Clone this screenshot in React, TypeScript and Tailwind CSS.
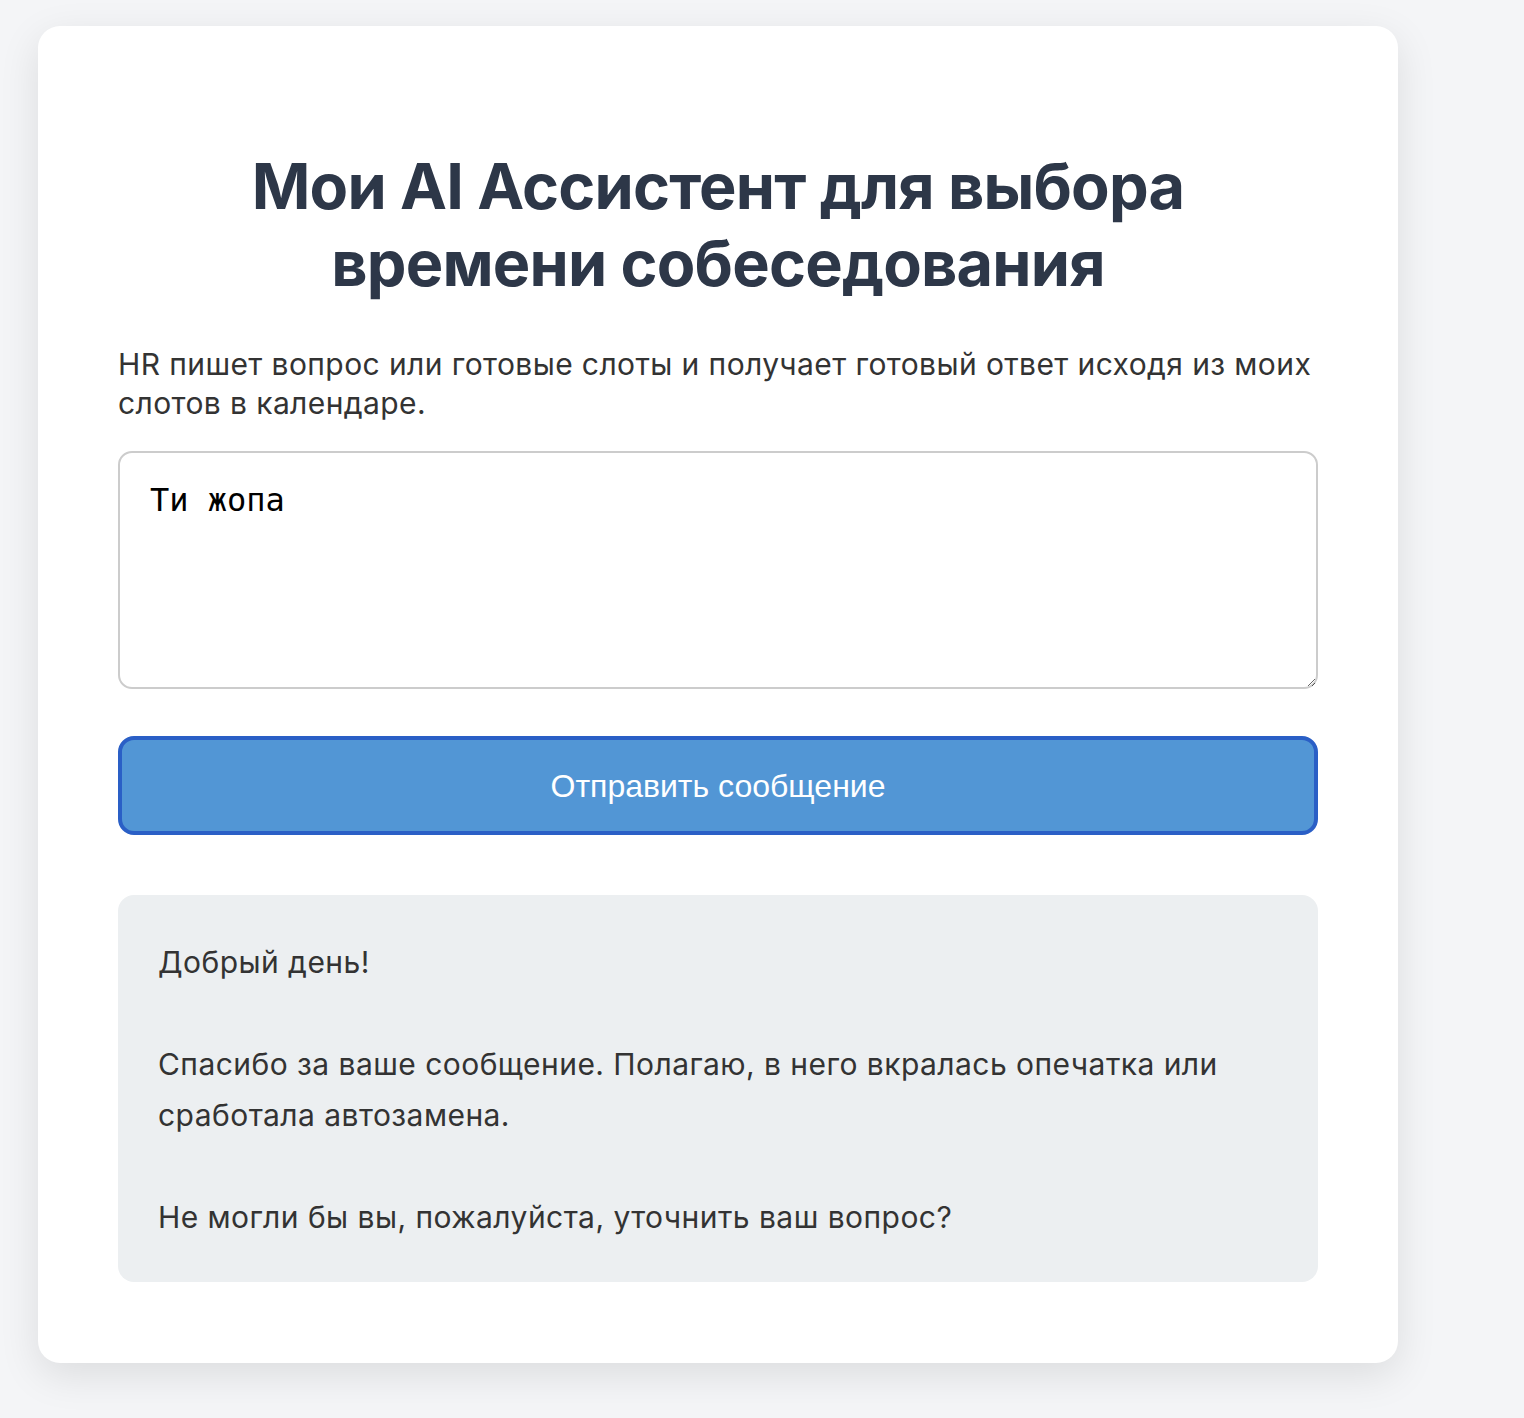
import React from "react";

export default function App() {
  const reply =
    "Добрый день!\n\nСпасибо за ваше сообщение. Полагаю, в него вкралась опечатка или сработала автозамена.\n\nНе могли бы вы, пожалуйста, уточнить ваш вопрос?";
  return (
    <div className="min-h-[1418px] w-full bg-[#f4f5f7] pl-[38px] pt-[26px] pb-[56px] font-['Inter',sans-serif]">
      <div className="w-[1360px] rounded-[22px] bg-white px-[80px] pt-[80px] pb-[81px] shadow-[0_12px_40px_rgba(0,0,0,0.10)]">
        <h1 className="mt-[42px] mb-[43px] text-center text-[63px] font-bold leading-[77px] tracking-[-0.8px] text-[#2d3748]">
          Мои AI Ассистент для выбора
          <br />
          времени собеседования
        </h1>
        <p className="mb-[28px] text-[30px] leading-[39px] tracking-[0.4px] text-[#333333]">
          HR пишет вопрос или готовые слоты и получает готовый ответ исходя из моих слотов в календаре.
        </p>
        <textarea
          defaultValue="Ти жопа"
          className="block h-[238px] w-full resize-y rounded-[14px] border-2 border-[#cccccc] bg-white px-[30px] py-[27px] font-['DejaVu_Sans_Mono',monospace] text-[32px] leading-[40px] text-black outline-none"
        />
        <button className="mt-[47px] flex h-[99px] w-full items-center justify-center rounded-[16px] border-[4px] border-[#2a5fc6] bg-[#5296d5] font-['Liberation_Sans',sans-serif] text-[32px] text-white">
          Отправить сообщение
        </button>
        <div className="mt-[60px] whitespace-pre-wrap rounded-[16px] bg-[#eceff1] px-[40px] pt-[42px] pb-[39px] text-[30px] leading-[51px] tracking-[0.45px] text-[#333333]">
          {reply}
        </div>
      </div>
    </div>
  );
}
